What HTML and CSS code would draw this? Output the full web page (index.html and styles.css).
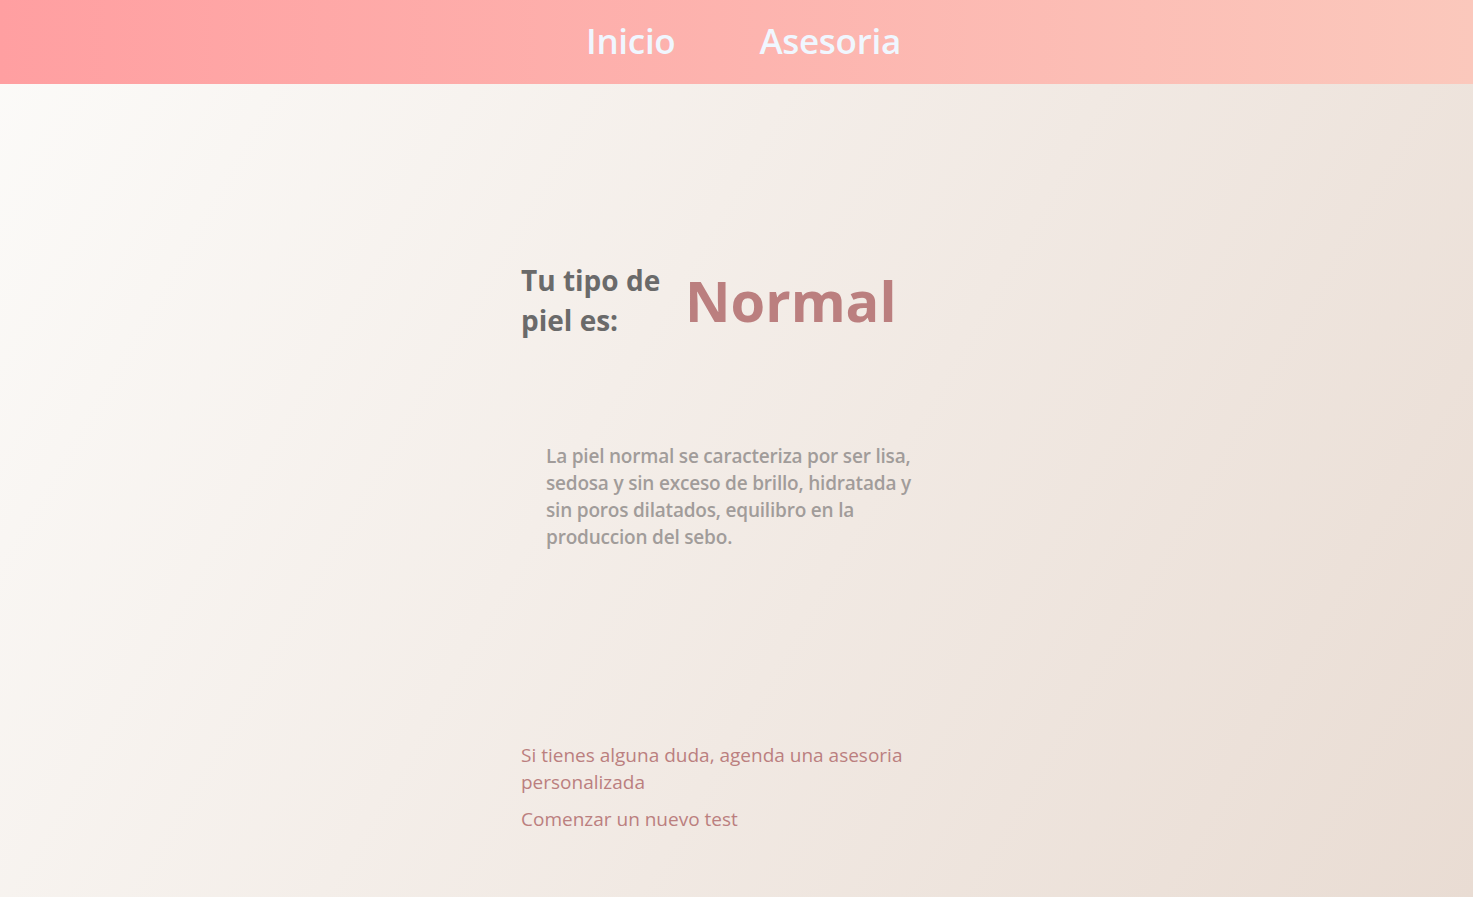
FILE: index.html
```html
<!DOCTYPE html>
<html lang="es">
<head>
<meta charset="utf-8">
<title>Resultado</title>
<link rel="stylesheet" href="styles.css">
</head>
<body>
<nav class="topbar">
  <a class="nav-link" href="#">Inicio</a>
  <a class="nav-link" href="#">Asesoria</a>
</nav>
<main class="page">
  <div class="content">
    <section class="result">
      <h2 class="result-label">Tu tipo de piel es:</h2>
      <h1 class="result-type">Normal</h1>
    </section>
    <p class="description">La piel normal se caracteriza por ser lisa, sedosa y sin exceso de brillo, hidratada y sin poros dilatados, equilibro en la produccion del sebo.</p>
    <div class="actions">
      <a class="action-link" href="#">Si tienes alguna duda, agenda una asesoria personalizada</a>
      <a class="action-link" href="#">Comenzar un nuevo test</a>
    </div>
  </div>
</main>
</body>
</html>
```
FILE: styles.css
```css
* { box-sizing: border-box; }
html, body { margin: 0; padding: 0; height: 100%; }
body {
  font-family: "Open Sans", "Noto Sans", "Liberation Sans", sans-serif;
  background: linear-gradient(120deg, #fcfbf9 0%, #e9dcd3 100%);
  min-height: 897px;
}
.topbar {
  height: 84px;
  display: flex;
  justify-content: center;
  align-items: center;
  gap: 84px;
  padding-left: 14px;
  padding-bottom: 3px;
  background: linear-gradient(to right, #ff9fa1 0%, #fbc8bc 100%);
}
.nav-link {
  color: #f0f7ff;
  text-decoration: none;
  font-size: 35px;
  font-weight: 600;
  letter-spacing: -0.3px;
}
.page {
  display: flex;
  justify-content: center;
}
.content {
  width: 432px;
  margin-left: 1px;
  padding-top: 176px;
}
.result {
  display: flex;
  align-items: center;
  gap: 18px;
}
.result-label {
  margin: 0;
  width: 146px;
  font-size: 28px;
  line-height: 40px;
  font-weight: 700;
  color: #6a6a6a;
  letter-spacing: 0;
}
.result-type {
  margin: 0;
  font-size: 56px;
  font-weight: 700;
  color: #bb7f7f;
  letter-spacing: 0;
}
.description {
  margin: 103px 0 0 25px;
  width: 385px;
  font-size: 19px;
  line-height: 27px;
  font-weight: 600;
  color: #a19c9a;
  letter-spacing: -0.2px;
}
.actions {
  margin-top: 191px;
  display: flex;
  flex-direction: column;
  gap: 10px;
  width: 395px;
}
.action-link {
  color: #bb7f7f;
  text-decoration: none;
  font-size: 19px;
  line-height: 27px;
  letter-spacing: 0;
}
```
